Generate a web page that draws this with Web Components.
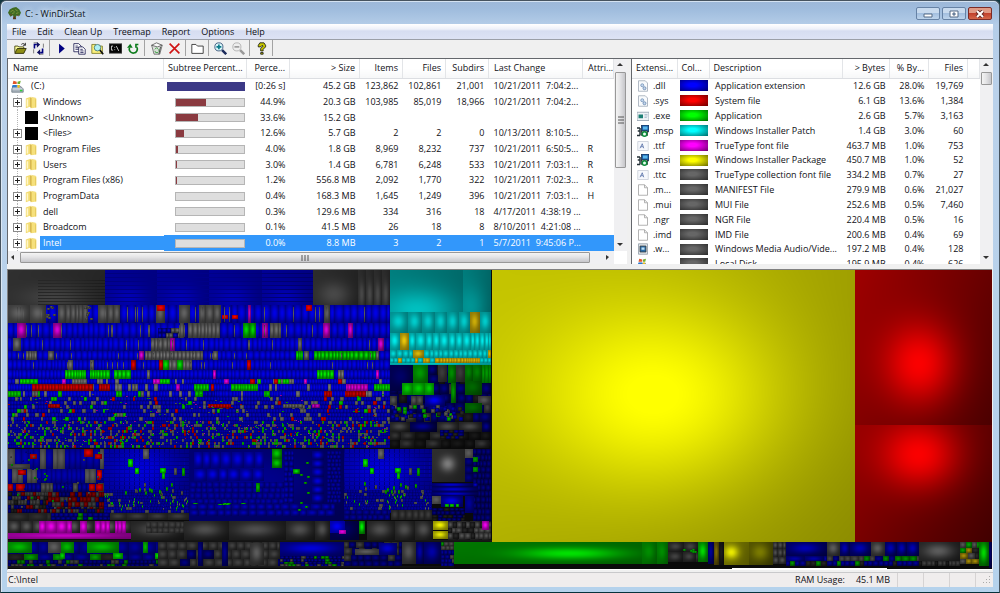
<!DOCTYPE html>
<html lang="en">
<head>
<meta charset="utf-8">
<meta name="viewport" content="width=device-width, initial-scale=1">
<title>C: - WinDirStat</title>
<style>
    html, body { height: 100%; }
    body {
        margin: 0;
        background: #123640;
        color: #101016;
        font: 9px/14px "Open Sans", "Noto Sans", sans-serif;
        overflow: hidden;
    }
</style>
</head>
<body>
<app-window heading="C: - WinDirStat">
    <menu-bar slot="menu"></menu-bar>
    <tool-bar slot="tools"></tool-bar>
    <split-view>
        <dir-list slot="left"></dir-list>
        <ext-list slot="right"></ext-list>
    </split-view>
    <tree-map></tree-map>
    <status-bar slot="status">
        C:\Intel
        <span slot="label">RAM Usage:</span>
        <span slot="value">45.1 MB</span>
    </status-bar>
</app-window>

<script>
// ---------- icons (16 x 16 grid) ----------

const ICONS = {
    tree: '<path d="M7 9h2l1 6H6z" fill="#5b3a1c"/><path d="M0 7l2-4 4-2 4-1 4 3 2 4-2 4-3-1-2 3-3-3-3 2z" fill="#3f6b22"/><path d="M3 6l3-2 2 2M9 3l3 2M5 8l3-1M10 8l3-1" stroke="#8a9a3c" fill="none"/><path d="M2 9l3 1M11 10l2 1" stroke="#7a3d22"/>',
    open: '<path d="M1 13V5h4l1 1h6v2" fill="#ffff9c" stroke="#333300"/><path d="M1 14l3-6h11l-3 6z" fill="#8e8e14" stroke="#222200"/><path d="M9 3c2-2 4-1 5 1M14 1v3h-3" fill="none" stroke="#111"/>',
    refreshAll: '<path d="M2 1h5M14 15H9M2 14V9M14 2v5" fill="none" stroke="#666"/><path d="M3 8V3h3M13 8v5h-3" fill="none" stroke="#000080" stroke-width="2"/><path d="M6 0l4 3-4 4zM10 16l-4-3 4-4z" fill="#101060"/>',
    play: '<path d="M5 2l7 6-7 6z" fill="#000080"/>',
    copy: '<path d="M1 2h6l3 3v7H1z" fill="#fff" stroke="#1a1a50"/><path d="M3 5h3M3 7h5M3 9h5" stroke="#1a1a50"/><path d="M7 6h5l3 3v6H7z" fill="#fff" stroke="#1a1a50"/><path d="M9 9h3M9 11h4M9 13h4" stroke="#1a1a50"/>',
    explore: '<path d="M1 3h5l1 2h7v9H1z" fill="#fbf07c" stroke="#777722"/><circle cx="8" cy="7" r="4" fill="#aef0f4" stroke="#3a7070"/><path d="M11 10l4 5" stroke="#111" stroke-width="2"/>',
    cmd: '<path d="M0 2h16v12H0z" fill="#050505" stroke="#777"/><path d="M5 5H3v5h2M7 6v1M7 9v1M9 5l3 6" fill="none" stroke="#eee"/>',
    reload: '<path d="M3 7a5 5 0 1 0 9-1" fill="none" stroke="#0a7a1a" stroke-width="2"/><path d="M0 7l4-5 3 5z" fill="#0a7a1a"/><path d="M10 3h4M11 3v4" fill="none" stroke="#0a7a1a" stroke-width="2"/>',
    recycle: '<path d="M2 4l3 11h7l3-11z" fill="#d9ded9" stroke="#666"/><path d="M2 4l6-3 7 3-6 2z" fill="#fafafa" stroke="#555"/><path d="M6 9l2-2 2 2M6 11l1 2h3M11 9v3" fill="none" stroke="#2c9a33"/><path d="M13 6l-2 9" stroke="#333"/>',
    remove: '<path d="M2 2l12 12M14 2L2 14" stroke="#d01414" stroke-width="2"/>',
    folderLine: '<path d="M1 14V3h5l2 2h7v9z" fill="#fff" stroke="#222"/>',
    zoomIn: '<path d="M10 10l5 5" stroke="#1b2a5a" stroke-width="3"/><circle cx="6" cy="6" r="5" fill="#d9f4f7" stroke="#29456e" stroke-width="1"/><path d="M3 6h6M6 3v6" stroke="#0b7a8a" stroke-width="2"/>',
    zoomOut: '<path d="M10 10l5 5" stroke="#999" stroke-width="3"/><circle cx="6" cy="6" r="5" fill="#eee" stroke="#aaa"/><path d="M3 6h6" stroke="#999" stroke-width="2"/>',
    help: '<path d="M4 6V4l2-3h5l2 3v2l-3 3v2H7V8l3-3-1-1-2 2z" fill="#c8c800" stroke="#111"/><path d="M7 13h3v2H7z" fill="#c8c800" stroke="#111"/>',
    drive: '<path d="M1 11l2-4h8l4 4v4H1z" fill="#aab4bd" stroke="#6f7b86"/><path d="M2 11h12" stroke="#eef"/><path d="M3 1l4 1v3L2 5z" fill="#e2552a"/><path d="M8 2l4-1-1 4H8z" fill="#6fae2e"/><path d="M2 6h5v3H1z" fill="#2a78d0"/><path d="M8 6h3l-1 4-2-1z" fill="#f2c21a"/><path d="M11 13h3" stroke="#2fd03a" stroke-width="2"/>',
    folder: '<path d="M1 3l6-2v12l-6 2z" fill="#f3dc72"/><path d="M7 2h6v11l-6 2z" fill="#dfc04a"/><path d="M8 1l6 2v11l-6 1z" fill="#f6e07c"/><path d="M3 4v9" stroke="#fff6c8" stroke-width="2"/><path d="M7 2v12" stroke="#c9a63a"/><path d="M13 4v10" stroke="#e2c658"/>',
    black: '<path d="M0 0h16v16H0z" fill="#000"/>',
    gears: '<path d="M2 1h9l3 3v11H2z" fill="#f8fafc" stroke="#9aa4b2"/><circle cx="7" cy="7" r="2" fill="#c6d8ee" stroke="#6f8fb4"/><circle cx="10" cy="11" r="2" fill="#c6d8ee" stroke="#5e7fa8"/>',
    app: '<path d="M0 3h16v11H0z" fill="#eef2f5" stroke="#8a98a8"/><path d="M2 6h6v5H2z" fill="#1d7f74"/><path d="M10 6h4M10 8h4M10 10h3" stroke="#9db2c4"/>',
    installer: '<path d="M6 0h10v9H6z" fill="#1c5ea8" stroke="#10233f"/><path d="M8 2h6v4H8z" fill="#59b8ec"/><path d="M0 4h4M4 4v10M0 14h4M1 8h3" stroke="#263238" stroke-width="2"/><path d="M6 8h8v6H6z" fill="#d9dfd6" stroke="#222"/><circle cx="10" cy="12" r="3" fill="#e8fff0" stroke="#0b8a3a" stroke-width="2"/>',
    font: '<path d="M1 2h14v12H1z" fill="#f6f8fc" stroke="#c4cad4"/><path d="M4 11l3-6 2 6M5 9h3" fill="none" stroke="#4a64a0"/>',
    page: '<path d="M2 1h8l4 4v10H2z" fill="#fff" stroke="#999"/><path d="M10 1v4h4" fill="none" stroke="#999"/>',
    media: '<path d="M2 1h12v14H2z" fill="#dfe5ea" stroke="#8b95a0"/><path d="M4 4h8v8H4z" fill="#2c6ea8" stroke="#333"/><path d="M6 6h4v3H6z" fill="#bfe0f6"/>'
};

function icon(name, size) {
    return `<svg width="${size}" height="${size}" viewBox="0 0 16 16" aria-hidden="true">${ICONS[name]}</svg>`;
}

// Attaches an open shadow root and fills it.
class Part extends HTMLElement {
    connectedCallback() {
        if (this.shadowRoot) return;
        this.attachShadow({ mode: 'open' }).innerHTML = this.render();
        this.ready();
    }
    ready() {}
}

// ---------- window frame ----------

class AppWindow extends Part {
    render() {
        return `
            <style>
                :host {
                    display: flex;
                    flex-direction: column;
                    height: 100%;
                    box-sizing: border-box;
                    border: 1px solid #46535f;
                    border-bottom: 1px solid #06323c;
                    border-radius: 6px 6px 0 0;
                    padding: 0 6px 5px 6px;
                    background: linear-gradient(#9db8d8 0, #9fbcdd 8px, #b4cde8 24px, #bad1ea 90px, #b5d2ec 100%);
                    box-shadow: inset 0 1px 0 #d4e2f1, inset 1px 0 0 #dbe7f3;
                }
                header { display: flex; align-items: center; height: 23px; padding-top: 2px; box-sizing: border-box; }
                h1 { margin: 0 auto 0 4px; font: inherit; color: #0c1420; text-shadow: 0 0 6px #e4eefa, 0 0 6px #e4eefa; }
                header svg { margin-left: 1px; flex: none; }
                .controls { display: flex; gap: 2px; margin-right: 1px; }
                button {
                    width: 24px;
                    height: 13px;
                    padding: 0;
                    display: grid;
                    place-items: center;
                    border: 1px solid #6682a5;
                    border-radius: 2px;
                    background: linear-gradient(#c8daee 45%, #a3bfdf 50%, #bdd4ec);
                }
                button svg { margin: 0; }
                .close { border-color: #7c2b27; background: linear-gradient(#df9a86 45%, #c1402c 50%, #d3674a); }
                .client { flex: 1; min-height: 0; display: flex; flex-direction: column; background: #f0f0f0; }
            </style>
            <header>
                ${icon('tree', 13)}
                <h1>${this.getAttribute('heading')}</h1>
                <div class="controls">
                    <button aria-label="Minimize"><svg width="12" height="8"><path d="M2 4h8v3H2z" fill="#fff" stroke="#546a86"/></svg></button>
                    <button aria-label="Maximize"><svg width="12" height="8"><path d="M2 1h8v6H2z" fill="#fff" stroke="#546a86"/><path d="M5 3h2v2H5z" fill="#a9c2df" stroke="#546a86"/></svg></button>
                    <button class="close" aria-label="Close"><svg width="12" height="8"><path d="M3 1l6 6M9 1L3 7" stroke="#6b2a25" stroke-width="4"/><path d="M3 1l6 6M9 1L3 7" stroke="#fff" stroke-width="2"/></svg></button>
                </div>
            </header>
            <div class="client">
                <slot name="menu"></slot>
                <slot name="tools"></slot>
                <slot></slot>
                <slot name="status"></slot>
            </div>`;
    }
}

class MenuBar extends Part {
    render() {
        const items = ['File', 'Edit', 'Clean Up', 'Treemap', 'Report', 'Options', 'Help'];
        return `
            <style>
                :host { display: block; background: linear-gradient(#fff, #eef1f9 5px, #d6ddf1 7px, #dce2f4 14px); border-bottom: 1px solid #9b9fa8; }
                nav { display: flex; }
                button { height: 15px; padding: 0 5px; margin-right: 1px; border: 0; background: none; font: inherit; color: inherit; }
            </style>
            <nav aria-label="Menu">${items.map(i => `<button>${i}</button>`).join('')}</nav>`;
    }
}

class ToolBar extends Part {
    render() {
        const groups = [
            [['open', 'Open'], ['refreshAll', 'Refresh all']],
            [['play', 'Resume'], ['copy', 'Copy path'], ['explore', 'Explorer here'], ['cmd', 'Command prompt here'], ['reload', 'Refresh selected']],
            [['recycle', 'Delete to recycle bin'], ['remove', 'Delete']],
            [['folderLine', 'Select parent']],
            [['zoomIn', 'Zoom in'], ['zoomOut', 'Zoom out']],
            [['help', 'Help']]
        ];
        return `
            <style>
                :host { display: flex; padding: 0 0 2px 2px; background: #f0f0f0; border-bottom: 1px solid #64676c; }
                div { display: flex; padding: 0 2px 0 2px; border-right: 1px solid #a3a3a3; }
                div:first-child { border-left: 1px solid #a3a3a3; }
                button { width: 18px; height: 16px; padding: 0; border: 0; background: none; display: grid; place-items: center; }
            </style>
            ${groups.map(g => `<div>${g.map(([n, t]) => `<button aria-label="${t}">${icon(n, 13)}</button>`).join('')}</div>`).join('')}`;
    }
}

// Two panes side by side, the left one a bit wider.
class SplitView extends Part {
    render() {
        return `
            <style>
                :host { display: grid; grid-template-columns: 620fr 362fr; gap: 4px; }
                ::slotted(*) { min-width: 0; background: #fff; border-left: 1px solid #64676c; }
            </style>
            <slot name="left"></slot>
            <slot name="right"></slot>`;
    }
}

class ScrollBar extends Part {
    render() {
        const flat = this.hasAttribute('horizontal');
        const size = this.getAttribute('size');
        const arrow = flat ? ['M6 4v5L3 6z', 'M4 4v5l3-3z'] : ['M3 7h6L6 4z', 'M3 5h6L6 8z'];
        return `
            <style>
                :host { display: flex; flex-direction: ${flat ? 'row' : 'column'}; background: #f0f0f2; }
                .track { flex: 1; display: flex; flex-direction: inherit; }
                .thumb {
                    flex: 0 0 ${size};
                    box-sizing: border-box;
                    margin: ${flat ? '1px 0' : '0 1px'};
                    border: 1px solid #989898;
                    border-radius: 1px;
                    background: linear-gradient(${flat ? '' : '90deg,'} #f4f4f4, #e4e4e6 45%, #c6c6ca);
                    display: grid;
                    place-items: center;
                }
                svg { flex: none; display: block; }
            </style>
            <svg width="12" height="13"><path d="${arrow[0]}" fill="#333"/></svg>
            <div class="track"><div class="thumb">${this.hasAttribute('grip')
                ? `<svg width="8" height="8"><path d="${flat ? 'M1 1v6M4 1v6M7 1v6' : 'M1 1h6M1 4h6M1 7h6'}" stroke="#555"/></svg>` : ''}</div></div>
            <svg width="12" height="13"><path d="${arrow[1]}" fill="#333"/></svg>`;
    }
}

// Table rules shared by both lists.
const LIST_CSS = `
    table { width: 100%; table-layout: fixed; border-collapse: collapse; }
    th, td { padding: 0 4px; text-align: right; font-weight: normal; white-space: pre; overflow: hidden; line-height: 14px; }
    th { height: 19px; box-sizing: border-box; border-right: 1px solid #e3e5e8; border-bottom: 1px solid #dcdee2; background: linear-gradient(#fff 50%, #f6f7f8); }
    .l { text-align: left; }
    svg { display: block; flex: none; }
`;

// ---------- directory list ----------

const DIRS = [
    ['drive', '(C:)', 100, '[0:26 s]', '45.2 GB', '123,862', '102,861', '21,001', '10/21/2011  7:04:2...', ''],
    ['folder', 'Windows', 44.9, '44.9%', '20.3 GB', '103,985', '85,019', '18,966', '10/21/2011  7:04:2...', ''],
    ['black', '&lt;Unknown&gt;', 33.6, '33.6%', '15.2 GB', '', '', '', '', ''],
    ['black', '&lt;Files&gt;', 12.6, '12.6%', '5.7 GB', '2', '2', '0', '10/13/2011  8:10:5...', ''],
    ['folder', 'Program Files', 3, '4.0%', '1.8 GB', '8,969', '8,232', '737', '10/21/2011  6:50:5...', 'R'],
    ['folder', 'Users', 2, '3.0%', '1.4 GB', '6,781', '6,248', '533', '10/21/2011  7:03:1...', 'R'],
    ['folder', 'Program Files (x86)', 1, '1.2%', '556.8 MB', '2,092', '1,770', '322', '10/21/2011  7:02:3...', 'R'],
    ['folder', 'ProgramData', 0, '0.4%', '168.3 MB', '1,645', '1,249', '396', '10/21/2011  7:03:1...', 'H'],
    ['folder', 'dell', 0, '0.3%', '129.6 MB', '334', '316', '18', '4/17/2011  4:38:19 ...', ''],
    ['folder', 'Broadcom', 0, '0.1%', '41.5 MB', '26', '18', '8', '8/10/2011  4:21:08 ...', ''],
    ['folder', 'Intel', 0, '0.0%', '8.8 MB', '3', '2', '1', '5/7/2011  9:45:06 P...', '']
];

class DirList extends Part {
    row([pic, name, pct, ...cells], i) {
        const root = i === 0;
        const last = i === DIRS.length - 1;
        const plus = name.includes('Unknown') || root ? '' : `<button aria-label="Expand"></button>`;
        return `
            <tr class="${root ? 'root' : ''} ${last ? 'selected' : ''}">
                <td class="name"><div><span class="branch">${plus}</span>${icon(pic, 13)}<span class="label">${name}</span></div></td>
                <td><div class="bar"><i style="width:${pct}%"></i></div></td>
                ${cells.map((c, n) => `<td${n > 4 ? ' class="l"' : ''}>${c}</td>`).join('')}
            </tr>`;
    }
    render() {
        const heads = ['Subtree Percent...', 'Perce...', '&gt; Size', 'Items', 'Files', 'Subdirs', 'Last Change', 'Attri...'];
        const widths = [83, 43, 70, 43, 43, 43, 94, 31];
        return `
            <style>
                ${LIST_CSS}
                :host { display: grid; grid-template-columns: 1fr 13px; grid-template-rows: auto 13px; }
                tbody tr { height: 16px; }
                tbody tr:nth-child(3n) { height: 15px; }
                .name { padding: 0; text-align: left; }
                .name div { display: flex; align-items: center; height: 15px; }
                .branch { width: 17px; align-self: stretch; display: grid; place-items: center; background: repeating-linear-gradient(#b5b5b5 0 1px, transparent 1px 2px) 9px 0 / 1px 100% no-repeat; }
                .branch button { width: 9px; height: 9px; padding: 0; margin-left: 2px; border: 1px solid #8a8a8a;
                    background: linear-gradient(#222, #222) center / 5px 1px no-repeat, linear-gradient(#222, #222) center / 1px 5px no-repeat, #fff; }
                .label { flex: 1; margin-left: 2px; padding-left: 3px; }
                .root .branch { width: 3px; background: none; }
                .root .label { padding-left: 5px; }
                td:nth-child(2) { padding-right: 2px; }
                .bar { height: 7px; margin-left: 7px; border: 1px solid #b5b5b5; background: #dedede; }
                .bar i { display: block; height: 7px; background: #8a3a40; }
                .root .bar { margin-left: 0; border-color: #3c3986; }
                .root .bar i { background: #3c3986; }
                .root td:nth-child(2) { padding-left: 3px; }
                .selected td:not(.name), .selected .label { background: #3297fb; color: #fff; }
                .l { padding-left: 5px; padding-right: 0; }
            </style>
            <table>
                <colgroup><col>${widths.map(w => `<col style="width:${w}px">`).join('')}</colgroup>
                <thead><tr><th class="l">Name</th>${heads.map((h, i) => `<th${i > 5 ? ' class="l"' : ''}>${h}</th>`).join('')}</tr></thead>
                <tbody>${DIRS.map(this.row).join('')}</tbody>
            </table>
            <scroll-bar size="58%" grip></scroll-bar>
            <scroll-bar horizontal size="98%" grip></scroll-bar>`;
    }
}

// ---------- extension list ----------

const EXTS = [
    ['gears', '.dll', '#0000ff', 'Application extension', '12.6 GB', '28.0%', '19,769'],
    ['gears', '.sys', '#ff0000', 'System file', '6.1 GB', '13.6%', '1,384'],
    ['app', '.exe', '#00ff00', 'Application', '2.6 GB', '5.7%', '3,163'],
    ['installer', '.msp', '#00ffff', 'Windows Installer Patch', '1.4 GB', '3.0%', '60'],
    ['font', '.ttf', '#ff00ff', 'TrueType font file', '463.7 MB', '1.0%', '753'],
    ['installer', '.msi', '#ffff00', 'Windows Installer Package', '450.7 MB', '1.0%', '52'],
    ['font', '.ttc', '#666666', 'TrueType collection font file', '334.2 MB', '0.7%', '27'],
    ['page', '.m...', '#666666', 'MANIFEST File', '279.9 MB', '0.6%', '21,027'],
    ['page', '.mui', '#666666', 'MUI File', '252.6 MB', '0.5%', '7,460'],
    ['page', '.ngr', '#666666', 'NGR File', '220.4 MB', '0.5%', '16'],
    ['page', '.imd', '#666666', 'IMD File', '200.6 MB', '0.4%', '69'],
    ['media', '.w...', '#666666', 'Windows Media Audio/Vide...', '197.2 MB', '0.4%', '128'],
    ['drive', '', '#666666', 'Local Disk', '195.9 MB', '0.4%', '626']
];

class ExtList extends Part {
    render() {
        const heads = ['Extensi...', 'Col...', 'Description', '&gt; Bytes', '% By...', 'Files', ''];
        const widths = [45, 32, 0, 47, 39, 39, 12];
        return `
            <style>
                ${LIST_CSS}
                :host { display: grid; grid-template-columns: 1fr 13px; }
                .view { contain: size; overflow: hidden; }
                tbody tr { height: 15px; }
                tbody tr:nth-child(6n) { height: 14px; }
                td:nth-child(1) { padding: 0 0 0 5px; }
                td:nth-child(2) { padding: 0 1px 0 3px; }
                td:nth-child(3) { padding-right: 0; padding-left: 6px; }
                th:nth-child(-n+3) { padding-left: 4px; padding-right: 0; }
                td div { display: flex; align-items: center; gap: 4px; height: 14px; }
                i { display: block; height: 11px; background: radial-gradient(ellipse at 45% 45%, transparent 20%, rgba(0, 0, 0, .55) 95%) var(--hue); }
            </style>
            <div class="view"><table>
                <colgroup>${widths.map(w => `<col${w ? ` style="width:${w}px"` : ''}>`).join('')}</colgroup>
                <thead><tr>${heads.map((h, i) => `<th${i < 3 ? ' class="l"' : ''}>${h}</th>`).join('')}</tr></thead>
                <tbody>${EXTS.map(([pic, ext, hue, text, ...nums]) => `
                    <tr>
                        <td class="l"><div>${icon(pic, 12)}${ext}</div></td>
                        <td><i style="--hue:${hue}"></i></td>
                        <td class="l">${text}</td>
                        ${nums.map(n => `<td>${n}</td>`).join('')}
                        <td></td>
                    </tr>`).join('')}</tbody>
            </table></div>
            <scroll-bar size="13px"></scroll-bar>`;
    }
}

// ---------- treemap ----------

const HUE = {
    b: [0, 0, 255], r: [255, 0, 0], g: [0, 255, 0], c: [0, 255, 255], w: [255, 255, 255],
    m: [255, 0, 255], y: [255, 255, 0], o: [255, 215, 10], k: [130, 130, 130], d: [60, 60, 60]
};

class TreeMap extends Part {
    render() {
        return `
            <style>
                :host { display: block; flex: 1; min-height: 0; margin-top: 5px; margin-right: 1px; border: 1px solid #808080; border-right: 0; border-bottom-color: #fff; background: #0a0a0a; }
                canvas { display: block; width: 100%; height: 100%; }
            </style>
            <canvas role="img" aria-label="Treemap of drive C"></canvas>`;
    }

    ready() {
        const canvas = this.shadowRoot.querySelector('canvas');
        this.w = canvas.width = canvas.clientWidth;
        this.h = canvas.height = canvas.clientHeight;
        const ctx = canvas.getContext('2d');
        this.img = ctx.createImageData(this.w, this.h);
        this.seed = 7;
        this.draw();
        ctx.putImageData(this.img, 0, 0);
    }

    // mulberry32, so the map looks the same on every load
    random() {
        this.seed = (this.seed + 0x6D2B79F5) | 0;
        let t = Math.imul(this.seed ^ (this.seed >>> 15), 1 | this.seed);
        t = (t + Math.imul(t ^ (t >>> 7), 61 | t)) ^ t;
        return ((t ^ (t >>> 14)) >>> 0) / 4294967296;
    }

    // One cushion. lo is the light at the rim, hi at the summit (u, v); tilt darkens the lower right.
    cushion(x, y, w, h, hue, { lo = 0.32, hi = 0.8, u = 0.48, v = 0.45, k = 2, tilt = 0.04 } = {}) {
        const sx = this.w / 984, sy = this.h / 299;
        const x0 = Math.round(x * sx), x1 = Math.min(this.w, Math.round((x + w) * sx));
        const y0 = Math.round(y * sy), y1 = Math.min(this.h, Math.round((y + h) * sy));
        const [r, g, b] = HUE[hue];
        const data = this.img.data;
        for (let py = y0; py < y1; py++) {
            const dy = 2 * ((py + 0.5 - y0) / (y1 - y0) - v);
            for (let px = x0; px < x1; px++) {
                const dx = 2 * ((px + 0.5 - x0) / (x1 - x0) - u);
                const l = lo + (hi - lo) * Math.exp(-k * (dx * dx + dy * dy)) - tilt * (dx + dy / 2);
                const i = (py * this.w + px) * 4;
                data[i] = r * l;
                data[i + 1] = g * l;
                data[i + 2] = b * l;
                data[i + 3] = 255;
            }
        }
    }

    // Fills a box with rows of cushions; mix is a string of hues picked at random.
    grid(x, y, w, h, rowH, colW, mix, light = {}) {
        const rows = Math.max(1, Math.round(h / rowH));
        for (let n = 0; n < rows; n++) {
            const top = y + Math.round(n * h / rows), bottom = y + Math.round((n + 1) * h / rows);
            let left = x;
            while (left < x + w) {
                let step = Math.max(1, Math.round(colW * (0.75 + this.random() * 0.5)));
                if (x + w - left - step < 2) step = x + w - left;
                this.cushion(left, top, step, bottom - top, mix[Math.floor(this.random() * mix.length)], light);
                left += step;
            }
        }
    }

    // [x, width, hue, tileWidth?] items laid over one row.
    row(y, h, items, light) {
        for (const [x, w, hue, step] of items) {
            if (step) this.grid(x, y, w, h, h, step, hue, light);
            else this.cushion(x, y, w, h, hue, light);
        }
    }

    // Light specks scattered in a box.
    specks(x, y, w, h, count, mix, sw = 2, sh = 2) {
        for (let i = 0; i < count; i++) {
            this.cushion(x + Math.floor(this.random() * (w - sw)), y + Math.floor(this.random() * (h - sh)), sw, sh,
                mix[Math.floor(this.random() * mix.length)], { lo: 0.35, hi: 0.7 });
        }
    }

    draw() {
        this.drawSystem();
        this.drawPatches();
        this.drawStore();
        this.drawMiddle();
        this.drawBottom();

        // the three largest files
        this.cushion(484, 0, 363, 272, 'y', { lo: 0.66, hi: 1.01, u: 0.47, v: 0.47, k: 2, tilt: 0.07 });
        this.cushion(847, 0, 137, 155, 'r', { lo: 0.45, hi: 0.98, u: 0.48, v: 0.61, k: 3.6, tilt: 0.11 });
        this.cushion(847, 155, 137, 117, 'r', { lo: 0.45, hi: 0.98, u: 0.48, v: 0.26, k: 3, tilt: 0.11 });
    }

    drawSystem() {
        this.cushion(0, 0, 97, 35, 'k', { lo: 0.3, hi: 0.5, v: 0.8 });
        for (let y = 10; y < 35; y += 3) this.cushion(30, y, 67, 1, 'k', { lo: 0.25, hi: 0.3 });
        this.row(0, 35, [[97, 52, 'b'], [149, 52, 'b'], [201, 53, 'b'], [254, 51, 'b']], { lo: 0.52, hi: 0.7, v: 0.8 });
        for (let y = 3; y < 35; y += 4) this.cushion(97, y, 208, 1, 'b', { lo: 0.44, hi: 0.54 });
        this.row(0, 35, [[305, 45, 'k'], [350, 8, 'k'], [358, 8, 'k'], [366, 8, 'k'], [374, 8, 'k']], { lo: 0.28, hi: 0.55, v: 0.7 });

        const edges = [35, 53, 68, 81, 90, 100, 109, 114, 121, 127];
        const widths = [7, 6, 5, 5, 4, 4, 3, 3, 3];
        widths.forEach((w, i) => this.grid(0, edges[i], 382, edges[i + 1] - edges[i], 99, w,
            i > 5 ? 'bbbbbbbbk' : 'b', { lo: 0.38, hi: 0.9, k: 0.9 }));

        this.row(35, 18, [[0, 22, 'k'], [22, 16, 'k'], [50, 8, 'k'], [58, 22, 'k', 4], [90, 10, 'k'], [100, 12, 'k', 6],
            [148, 9, 'k'], [171, 11, 'k'], [191, 22, 'k', 8], [316, 6, 'k'], [240, 3, 'm']], { lo: 0.4, hi: 0.75 });
        this.row(35, 6, [[149, 8, 'r'], [298, 6, 'r']], { lo: 0.6, hi: 0.95 });
        this.row(45, 4, [[214, 6, 'r'], [224, 6, 'r']], { lo: 0.6, hi: 1 });
        this.specks(38, 36, 12, 16, 8, 'k', 3, 2);
        this.specks(76, 36, 10, 16, 8, 'k', 3, 2);
        this.row(53, 15, [[9, 9, 'm'], [45, 9, 'm'], [235, 7, 'g'], [242, 6, 'g'], [254, 6, 'm'], [262, 11, 'k', 5], [315, 7, 'm'], [340, 5, 'm'],
            [172, 40, 'kkkb', 4]], { lo: 0.42, hi: 0.85 });
        this.grid(150, 58, 22, 10, 5, 4, 'kkb');
        this.row(68, 13, [[5, 8, 'k'], [143, 19, 'k', 4], [162, 5, 'm'], [290, 4, 'k'], [370, 6, 'm']], { lo: 0.4, hi: 0.85 });
        this.row(81, 9, [[18, 11, 'k', 3], [40, 6, 'k'], [131, 5, 'm'], [137, 58, 'k', 4], [205, 5, 'k'], [288, 7, 'g', 3], [296, 5, 'k'],
            [306, 62, 'g', 4], [368, 3, 'k']], { lo: 0.4, hi: 0.9 });
        this.row(90, 10, [[60, 5, 'k'], [82, 4, 'k'], [123, 5, 'r'], [151, 4, 'r'], [155, 6, 'g'], [161, 8, 'k', 4], [169, 6, 'g'], [175, 9, 'k', 3], [239, 4, 'r']], { lo: 0.45, hi: 0.9 });
        this.row(100, 9, [[57, 21, 'g', 3], [82, 20, 'g', 3], [106, 17, 'g', 4], [139, 3, 'k'], [205, 3, 'm'], [309, 17, 'g', 3], [330, 6, 'k', 3], [368, 3, 'm']], { lo: 0.45, hi: 0.95 });
        this.row(109, 5, [[12, 18, 'g', 3], [54, 4, 'm'], [64, 18, 'kkb', 3], [145, 7, 'm', 3], [152, 10, 'g', 3], [216, 5, 'm'], [242, 5, 'r'], [250, 3, 'g'],
            [266, 4, 'r'], [270, 14, 'kg', 3], [296, 3, 'm'], [330, 4, 'r']], { lo: 0.5, hi: 0.9 });
        this.row(114, 7, [[24, 61, 'r', 3], [91, 11, 'r', 3], [124, 6, 'k', 3], [168, 4, 'm'], [186, 15, 'g', 3], [203, 3, 'r'], [223, 27, 'g', 3], [338, 22, 'm', 3], [366, 16, 'g', 3]], { lo: 0.45, hi: 0.85 });
        this.row(121, 6, [[0, 13, 'g', 3], [24, 8, 'kg', 3], [50, 4, 'g'], [108, 6, 'g', 3], [130, 6, 'gk', 3], [187, 20, 'gb', 3], [256, 6, 'g', 3], [316, 8, 'r', 3], [337, 21, 'r', 3]], { lo: 0.45, hi: 0.8 });

        // light streaks between the dll columns
        for (let i = 0; i < 80; i++) {
            const band = Math.floor(this.random() * 5);
            this.cushion(Math.floor(this.random() * 380), edges[band] + 2, 1, edges[band + 1] - edges[band] - 3, 'k', { lo: 0.4, hi: 0.7 });
        }
        this.grid(0, 127, 382, 24, 4, 3, 'bbbbbbbbbbbbbbbbbbkkkgr', { lo: 0.36, hi: 0.76, k: 1 });
        this.grid(0, 151, 382, 27, 3, 2, 'bbbbbbbbbbbbbkkkgrg', { lo: 0.4, hi: 0.66, k: 1 });
        this.row(134, 4, [[40, 12, 'r', 3], [200, 18, 'r', 3], [215, 8, 'r', 3], [275, 20, 'k', 3], [304, 8, 'm', 3]], { lo: 0.4, hi: 0.8 });
        this.specks(0, 124, 382, 54, 170, 'ggkkrm', 2, 1);
        this.specks(0, 150, 382, 28, 200, 'ggkrm', 1, 1);
    }

    drawPatches() {
        this.cushion(382, 0, 73, 42, 'c', { lo: 0.42, hi: 0.75, u: 0.4, v: 0.98, k: 0.9 });
        this.cushion(455, 0, 28, 42, 'c', { lo: 0.42, hi: 0.58, u: 0.3, v: 0.9, k: 0.9 });
        this.row(42, 21, [[382, 18, 'c'], [400, 14, 'c'], [414, 13, 'c'], [427, 12, 'c'], [439, 12, 'c'], [451, 11, 'c'], [462, 10, 'o'], [472, 11, 'c']], { lo: 0.5, hi: 0.8 });
        this.row(63, 17, [[382, 10, 'c'], [392, 9, 'o'], [401, 66, 'c', 8], [467, 16, 'c', 5]], { lo: 0.55, hi: 0.92 });
        this.row(80, 8, [[382, 23, 'c', 6], [405, 11, 'o'], [416, 67, 'c', 5], [480, 3, 'o']], { lo: 0.55, hi: 0.85 });
        this.row(88, 5, [[382, 40, 'cccoc', 4], [417, 15, 'oc', 4], [432, 40, 'o', 3], [472, 11, 'c', 4]], { lo: 0.55, hi: 0.85 });
        this.cushion(382, 93, 101, 2, 'c', { lo: 0.6, hi: 0.8 });

        this.grid(382, 95, 101, 57, 9, 8, 'bbbbdk', { lo: 0.25, hi: 0.5 });
        this.cushion(382, 95, 23, 26, 'b', { lo: 0.25, hi: 0.4 });
        this.row(95, 18, [[405, 15, 'g'], [474, 9, 'g', 3]], { lo: 0.4, hi: 0.6 });
        this.row(113, 12, [[394, 11, 'g'], [405, 12, 'g'], [417, 9, 'g']], { lo: 0.5, hi: 0.8 });
        this.row(95, 17, [[430, 9, 'k'], [448, 9, 'k']], { lo: 0.3, hi: 0.45 });
        this.cushion(440, 95, 8, 18, 'g', { lo: 0.35, hi: 0.55 });
        this.cushion(443, 113, 5, 20, 'g', { lo: 0.35, hi: 0.6 });
        this.row(95, 16, [[457, 8, 'g'], [465, 9, 'g']], { lo: 0.35, hi: 0.5 });
        this.cushion(457, 111, 17, 14, 'g', { lo: 0.3, hi: 0.4 });
        this.cushion(417, 125, 20, 12, 'b', { lo: 0.4, hi: 0.95 });
        this.row(126, 9, [[403, 6, 'k'], [409, 6, 'k'], [382, 7, 'k'], [470, 13, 'k']], { lo: 0.35, hi: 0.65 });
        this.cushion(457, 133, 17, 10, 'g', { lo: 0.3, hi: 0.4 });
        this.specks(382, 135, 75, 17, 60, 'bbgkd', 4, 4);
        this.grid(382, 152, 101, 10, 10, 22, 'kkkb', { lo: 0.2, hi: 0.55 });
        this.grid(382, 162, 101, 16, 8, 12, 'kdd', { lo: 0.18, hi: 0.4 });
        this.grid(432, 160, 24, 9, 3, 5, 'bbd', { lo: 0.25, hi: 0.55 });
    }

    // Blue block with a few executables in it; drawn twice on the disk.
    library(x, w) {
        this.cushion(x, 179, w, 64, 'b', { lo: 0.5, hi: 0.85, v: 0.35, k: 1.4 });
        for (let i = 5; i < w; i += 5) this.cushion(x + i, 179, 1, 45, 'b', { lo: 0.4, hi: 0.66 });
        for (let i = 4; i < 42; i += 4) this.cushion(x, 179 + i, w, 1, 'b', { lo: 0.45, hi: 0.72 });
        this.grid(x, 220, w, 23, 3, 3, 'bbbbbbbbbbk', { lo: 0.36, hi: 0.62, k: 1 });
        this.cushion(x + 39, 179, 6, 10, 'k', { lo: 0.5, hi: 0.8 });
        this.cushion(x + 24, 189, 5, 8, 'g', { lo: 0.5, hi: 0.95 });
        this.cushion(x + 31, 198, 4, 6, 'g', { lo: 0.5, hi: 0.95 });
        this.cushion(x + 56, 198, 6, 5, 'g', { lo: 0.5, hi: 0.95 });
        this.cushion(x + 58, 203, 3, 6, 'g', { lo: 0.5, hi: 0.8 });
        this.cushion(x + 70, 198, 3, 7, 'k', { lo: 0.4, hi: 0.7 });
        this.cushion(x + 78, 198, 3, 8, 'g', { lo: 0.4, hi: 0.7 });
        this.specks(x + 20, 212, w - 25, 14, 14, 'gk', 2, 4);
        this.specks(x, 224, w, 18, 50, 'ggkb', 1, 3);
    }

    drawStore() {
        this.grid(0, 179, 96, 20, 20, 6, 'bbbk', { lo: 0.4, hi: 0.68, k: 1 });
        this.grid(0, 199, 96, 14, 14, 5, 'bbbkk', { lo: 0.4, hi: 0.68, k: 1 });
        this.grid(0, 213, 96, 9, 9, 4, 'bbkb', { lo: 0.35, hi: 0.65 });
        this.grid(0, 222, 96, 21, 4, 3, 'bbkkrd', { lo: 0.25, hi: 0.5 });
        this.grid(40, 222, 56, 15, 5, 4, 'rrkb', { lo: 0.25, hi: 0.5 });
        this.row(179, 8, [[76, 9, 'r']], { lo: 0.5, hi: 0.9 });
        this.row(184, 5, [[22, 7, 'r'], [87, 7, 'r']], { lo: 0.5, hi: 0.8 });
        this.row(194, 5, [[0, 22, 'k']], { lo: 0.4, hi: 0.6 });
        this.row(200, 5, [[10, 8, 'r']], { lo: 0.5, hi: 0.9 });
        this.row(200, 10, [[89, 5, 'r']], { lo: 0.5, hi: 1 });
        this.row(214, 7, [[0, 5, 'r'], [8, 9, 'r'], [81, 6, 'r'], [88, 7, 'r']], { lo: 0.5, hi: 0.85 });
        this.specks(0, 180, 96, 62, 40, 'kgb', 2, 2);

        this.library(96, 85);
        this.library(331, 93);

        // winsxs
        this.cushion(181, 179, 155, 72, 'b', { lo: 0.38, hi: 0.55 });
        this.grid(186, 182, 70, 16, 16, 11, 'b', { lo: 0.46, hi: 0.88 });
        this.grid(186, 199, 70, 12, 12, 11, 'b', { lo: 0.46, hi: 0.88 });
        this.grid(182, 212, 100, 22, 5, 6, 'b', { lo: 0.42, hi: 0.66 });
        this.grid(182, 234, 145, 12, 6, 9, 'b', { lo: 0.4, hi: 0.72 });
        this.grid(276, 181, 10, 52, 5, 4, 'b', { lo: 0.38, hi: 0.7 });
        this.grid(304, 181, 12, 52, 9, 12, 'b', { lo: 0.38, hi: 0.85 });
        this.grid(319, 181, 14, 52, 4, 4, 'b', { lo: 0.35, hi: 0.65 });
        this.cushion(264, 179, 10, 10, 'g', { lo: 0.4, hi: 0.8 });
        this.cushion(264, 189, 10, 9, 'g', { lo: 0.4, hi: 0.8 });
        this.cushion(285, 199, 7, 5, 'g', { lo: 0.4, hi: 0.9 });
        this.cushion(248, 213, 4, 9, 'g', { lo: 0.4, hi: 0.7 });
        this.specks(290, 182, 14, 60, 8, 'g', 3, 2);
        this.specks(185, 233, 60, 3, 8, 'g', 5, 1);

        this.grid(0, 243, 43, 8, 8, 22, 'd', { lo: 0.5, hi: 0.8 });
        this.grid(43, 243, 59, 7, 4, 5, 'bbbbg', { lo: 0.3, hi: 0.6 });
        this.grid(102, 243, 79, 7, 7, 20, 'd', { lo: 0.5, hi: 1 });
        this.grid(336, 240, 46, 10, 5, 6, 'bbbb', { lo: 0.35, hi: 0.6 });
        this.grid(383, 240, 41, 10, 10, 8, 'd', { lo: 0.5, hi: 1 });

        this.cushion(424, 179, 33, 33, 'k', { lo: 0.3, hi: 0.95, k: 5 });
        this.cushion(457, 179, 8, 9, 'k', { lo: 0.5, hi: 0.7 });
        this.grid(457, 188, 8, 24, 8, 8, 'b', { lo: 0.3, hi: 0.5 });
        this.grid(465, 179, 18, 72, 6, 4, 'bbbb', { lo: 0.25, hi: 0.5 });
        this.row(187, 5, [[465, 5, 'g']], { lo: 0.4, hi: 0.6 });
        this.row(197, 5, [[465, 5, 'g']], { lo: 0.4, hi: 0.6 });
        this.grid(424, 213, 46, 13, 4, 46, 'b', { lo: 0.3, hi: 0.8 });
        this.cushion(424, 226, 9, 8, 'k', { lo: 0.5, hi: 0.7 });
        this.cushion(433, 226, 22, 11, 'b', { lo: 0.4, hi: 0.9 });
        this.cushion(457, 226, 9, 17, 'b', { lo: 0.4, hi: 0.6 });
        this.row(234, 3, [[437, 4, 'g'], [442, 4, 'g'], [448, 3, 'g']], { lo: 0.5, hi: 0.8 });
        this.grid(424, 238, 33, 13, 3, 5, 'bbd', { lo: 0.2, hi: 0.5 });
    }

    drawMiddle() {
        this.grid(0, 251, 123, 12, 12, 12, 'k', { lo: 0.25, hi: 0.65 });
        this.row(251, 12, [[31, 33, 'm', 9], [72, 7, 'm'], [87, 15, 'm', 7], [107, 11, 'm', 4]], { lo: 0.5, hi: 0.92 });
        this.cushion(0, 263, 123, 6, 'm', { lo: 0.5, hi: 0.75 });
        this.row(251, 19, [[123, 53, 'k'], [176, 45, 'k'], [221, 57, 'k'], [278, 29, 'k'], [307, 15, 'k'], [359, 28, 'k'], [387, 20, 'k'], [407, 18, 'k'],
            [440, 10, 'k'], [450, 12, 'k'], [462, 12, 'k'], [474, 9, 'k']], { lo: 0.2, hi: 0.6 });
        this.grid(138, 252, 38, 11, 6, 6, 'k', { lo: 0.3, hi: 0.5 });
        this.grid(440, 252, 43, 17, 5, 5, 'kkd', { lo: 0.3, hi: 0.65 });
        this.cushion(322, 251, 29, 19, 'b', { lo: 0.25, hi: 0.4 });
        this.cushion(322, 251, 15, 12, 'b', { lo: 0.6, hi: 0.95 });
        this.cushion(331, 260, 7, 4, 'm', { lo: 0.6, hi: 0.9 });
        this.cushion(351, 251, 6, 13, 'g', { lo: 0.4, hi: 0.95 });
        this.row(251, 9, [[425, 15, 'y'], [474, 7, 'm']], { lo: 0.5, hi: 0.95 });
        this.row(261, 8, [[425, 15, 'y']], { lo: 0.5, hi: 0.9 });
    }

    drawBottom() {
        this.cushion(0, 270, 984, 2, 'd', { lo: 0.3, hi: 0.4 });
        this.grid(0, 272, 150, 12, 12, 12, 'b', { lo: 0.4, hi: 0.6 });
        this.row(272, 11, [[0, 24, 'g'], [40, 13, 'k'], [53, 13, 'g'], [79, 32, 'g'], [135, 5, 'g']], { lo: 0.45, hi: 0.72 });
        this.grid(0, 284, 150, 7, 7, 13, 'bbbbgd', { lo: 0.35, hi: 0.6 });
        this.grid(0, 290, 150, 7, 3, 4, 'bbbkg', { lo: 0.25, hi: 0.5 });
        this.row(283, 6, [[105, 10, 'g'], [52, 5, 'g'], [147, 5, 'g']], { lo: 0.5, hi: 0.85 });
        this.grid(150, 272, 122, 25, 8, 9, 'kkkkkkkb', { lo: 0.25, hi: 0.5 });
        this.cushion(242, 273, 14, 22, 'k', { lo: 0.3, hi: 0.7 });
        this.row(272, 24, [[190, 5, 'b'], [214, 6, 'b']], { lo: 0.3, hi: 0.55 });
        this.cushion(272, 272, 66, 14, 'b', { lo: 0.4, hi: 0.85 });
        this.grid(272, 286, 66, 11, 3, 4, 'bbbkg', { lo: 0.25, hi: 0.6 });
        this.grid(336, 272, 58, 25, 6, 7, 'bbbk', { lo: 0.25, hi: 0.5 });
        this.cushion(347, 279, 24, 6, 'k', { lo: 0.4, hi: 0.7 });
        this.cushion(371, 273, 18, 12, 'b', { lo: 0.4, hi: 0.8 });
        this.row(272, 22, [[394, 14, 'k'], [408, 8, 'b'], [416, 17, 'b']], { lo: 0.3, hi: 0.65 });
        this.grid(433, 272, 13, 25, 4, 4, 'bgkb', { lo: 0.3, hi: 0.6 });
        this.cushion(0, 296, 446, 2, 'd', { lo: 0.3, hi: 0.5 });

        this.cushion(446, 272, 188, 22, 'g', { lo: 0.4, hi: 0.88, u: 0.62, v: 0.52, k: 3.5 });
        this.row(272, 22, [[634, 15, 'g'], [649, 11, 'g']], { lo: 0.4, hi: 0.55 });
        this.grid(660, 272, 30, 20, 10, 15, 'k', { lo: 0.2, hi: 0.5 });
        this.specks(672, 279, 18, 6, 5, 'g', 3, 2);
        this.cushion(690, 272, 10, 20, 'g', { lo: 0.4, hi: 0.85 });
        this.cushion(700, 272, 6, 22, 'b', { lo: 0.3, hi: 0.6 });
        this.row(272, 23, [[706, 5, 'o'], [711, 5, 'd'], [741, 24, 'y']], { lo: 0.26, hi: 0.48 });
        this.cushion(716, 272, 25, 23, 'y', { lo: 0.42, hi: 0.92, u: 0.3, k: 3 });
        this.grid(765, 272, 13, 22, 7, 6, 'k', { lo: 0.25, hi: 0.6 });
        this.row(272, 14, [[778, 41, 'b'], [819, 13, 'k'], [832, 10, 'b'], [842, 21, 'b'], [863, 14, 'k'], [877, 12, 'b'], [889, 10, 'b'], [899, 12, 'b']], { lo: 0.3, hi: 0.7 });
        this.grid(778, 286, 41, 6, 6, 20, 'b', { lo: 0.35, hi: 0.65 });
        this.grid(819, 286, 92, 6, 6, 7, 'bbbgk', { lo: 0.3, hi: 0.55 });
        this.grid(778, 291, 133, 5, 5, 5, 'bbgbd', { lo: 0.3, hi: 0.6 });
        this.cushion(911, 272, 41, 20, 'k', { lo: 0.22, hi: 0.7 });
        this.grid(911, 291, 41, 5, 5, 4, 'kd', { lo: 0.25, hi: 0.5 });
        this.grid(952, 272, 19, 22, 6, 7, 'kkdog', { lo: 0.35, hi: 0.65 });
        this.cushion(971, 272, 10, 24, 'g', { lo: 0.35, hi: 0.85 });
        this.cushion(981, 272, 3, 26, 'b', { lo: 0.25, hi: 0.4 });
        this.cushion(724, 298, 155, 1, 'w', { lo: 1, hi: 1, tilt: 0 });
    }
}

class StatusBar extends Part {
    render() {
        return `
            <style>
                :host { display: flex; align-items: center; height: 14px; margin-top: 2px; padding: 0 2px 0 1px; border-top: 1px solid #c9c9cb; background: #f0eded; }
                .text { flex: 1; }
                .ram { padding-right: 11px; }
                .value { padding-right: 7px; }
                i { align-self: stretch; box-sizing: border-box; border-left: 1px solid #d6d3d3; width: 26px; }
                i:last-of-type { width: 8px; }
            </style>
            <span class="text"><slot></slot></span>
            <span class="ram"><slot name="label"></slot></span>
            <span class="value"><slot name="value"></slot></span>
            <i></i><i></i><i></i><i></i>
            <svg width="8" height="8" aria-hidden="true"><path d="M6 0h1v1H6zM6 3h1v1H6zM3 3h1v1H3zM6 6h1v1H6zM3 6h1v1H3zM0 6h1v1H0z" fill="#aaa"/></svg>`;
    }
}

customElements.define('app-window', AppWindow);
customElements.define('menu-bar', MenuBar);
customElements.define('tool-bar', ToolBar);
customElements.define('scroll-bar', ScrollBar);
customElements.define('split-view', SplitView);
customElements.define('dir-list', DirList);
customElements.define('ext-list', ExtList);
customElements.define('status-bar', StatusBar);
customElements.define('tree-map', TreeMap);
</script>
</body>
</html>
